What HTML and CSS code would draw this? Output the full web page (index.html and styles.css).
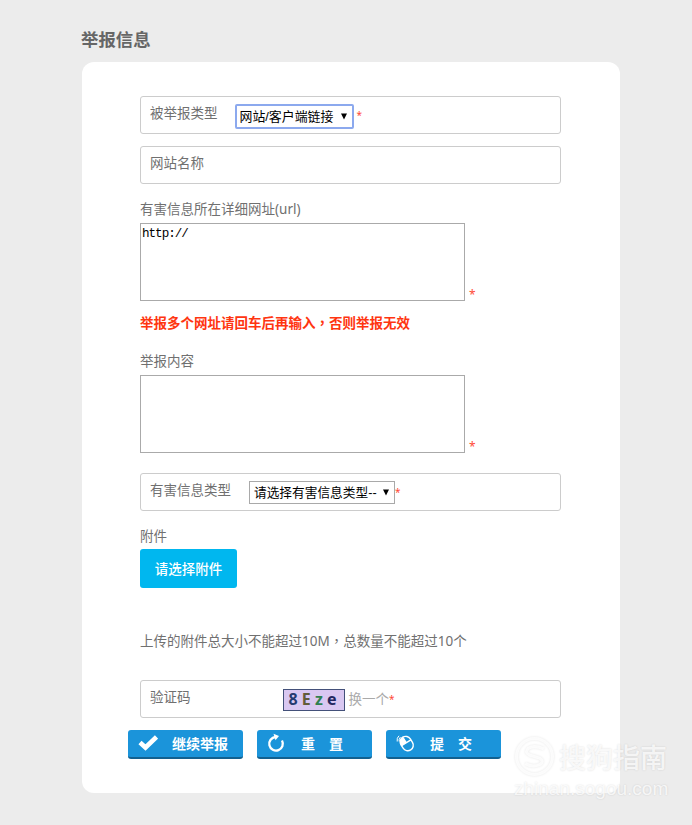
FILE: index.html
```
<!DOCTYPE html>
<html lang="zh-CN">
<head>
  <meta charset="UTF-8" />
  <title>举报信息</title>
  <link rel="stylesheet" href="styles.css">
</head>
<body>
  <h1>举报信息</h1>
  <form class="card">
    <div class="row">
      <label class="name" for="target">被举报类型</label>
      <div class="select active">
        <select id="target"><option>网站/客户端链接</option></select>
        <svg class="arrow" viewBox="0 0 6 7"><path d="M0 0.5h6L3 6.5z"/></svg>
      </div>
      <span class="star">*</span>
    </div>
    <div class="row">
      <label class="name">网站名称</label>
    </div>

    <label class="title" for="url">有害信息所在详细网址(url)</label>
    <div class="area">
      <textarea id="url">http://</textarea>
      <span class="star">*</span>
    </div>
    <p class="warn">举报多个网址请回车后再输入<span lang="zh-TW" class="comma">，</span>否则举报无效</p>

    <label class="title" for="content">举报内容</label>
    <div class="area">
      <textarea id="content"></textarea>
      <span class="star">*</span>
    </div>

    <div class="row kind">
      <label class="name" for="kind">有害信息类型</label>
      <div class="select">
        <select id="kind"><option>请选择有害信息类型--</option></select>
        <svg class="arrow" viewBox="0 0 6 7"><path d="M0 0.5h6L3 6.5z"/></svg>
      </div>
      <span class="star">*</span>
    </div>

    <div class="title">附件</div>
    <button type="button" class="upload">请选择附件</button>
    <p class="limit">上传的附件总大小不能超过10M<span lang="zh-TW" class="comma">，</span>总数量不能超过10个</p>

    <div class="row code">
      <label class="name">验证码</label>
      <div class="captcha"><span class="c1">8</span><span class="c2">E</span><span class="c3">z</span><span class="c4">e</span></div>
      <a class="change">换一个</a>
      <span class="star">*</span>
    </div>

    <div class="buttons">
      <button type="button">
        <svg class="icon" viewBox="0 0 20 20"><path d="M2 9.5l5.5 5L18.5 4" fill="none" stroke="#fff" stroke-width="4.6"/></svg>
        <span>继续举报</span>
      </button>
      <button type="button">
        <svg class="icon" viewBox="0 0 20 20"><path d="M8.5 4A6.8 6.8 0 1 0 15 7.5" fill="none" stroke="#fff" stroke-width="2.3"/><path d="M6.5 0.8l5.500 2.200-3.500 4.300z" fill="#fff"/></svg>
        <span>重<i></i>置</span>
      </button>
      <button type="button">
        <svg class="icon" viewBox="0 0 20 20">
          <g transform="rotate(-32 11 11)" fill="none" stroke="#fff" stroke-width="1.4">
            <rect x="5.5" y="3" width="11" height="15" rx="5.5"/>
            <path d="M5.5 9.5h11M11 3.5v6"/>
            <path d="M6 9V7.5Q6.8 4 10.5 3.5V9z" fill="#fff"/>
          </g>
          <path d="M1.2 8.5Q.5 5 3 2.8M3.2 8.5Q2.6 6 4.4 4.2" fill="none" stroke="#fff" stroke-width="1"/>
        </svg>
        <span>提<i></i>交</span>
      </button>
    </div>
  </form>

  <div class="watermark">
    <div class="brand">
      <svg viewBox="0 0 40 40">
        <circle cx="20" cy="20" r="17.5"/>
        <path d="M29 12.5Q20 8.5 14 12Q10 16 15 18.5L25 21.5Q30 25 25 28Q18 31 11 27"/>
      </svg>
      <span>搜狗指南</span>
    </div>
    <div class="site">zhinan.sogou.com</div>
  </div>
</body>
</html>
```
FILE: styles.css
```
* { box-sizing: border-box; }
body {
  position: relative;
  margin: 0;
  height: 825px;
  padding: 26px 72px 0 82px;
  overflow: hidden;
  background: #ececec;
  color: #707070;
  font-family: "Noto Sans", "Noto Sans CJK SC", sans-serif;
  font-size: 13.5px;
}
h1 {
  margin: 0 0 10px -1px;
  font-size: 17.4px;
  line-height: 26px;
  color: #666;
}
p { margin: 0; }
.card {
  height: 731px;
  padding: 34px 59px 0 58px;
  border-radius: 12px;
  background: #fff;
}
.row {
  display: flex;
  height: 38px;
  margin-bottom: 12px;
  padding-left: 9px;
  border: 1px solid #ccc;
  border-radius: 3px;
}
.name { line-height: 32px; }
.select {
  display: flex;
  align-items: center;
  width: 146px;
  height: 23px;
  margin: 7px 0 0 18px;
  padding: 0 5px 0 4px;
  border: 1px solid #a9a9a9;
}
.select select {
  flex: 1;
  min-width: 0;
  padding: 0;
  border: 0;
  outline: 0;
  appearance: none;
  background: none;
  color: #000;
  font: 12.7px "Liberation Sans", "Noto Sans CJK SC", sans-serif;
}
.select.active {
  width: 119px;
  height: 25px;
  margin: 7px 0 0 17px;
  padding: 0 5px 0 3px;
  border: 2px solid #8ca9ee;
  border-radius: 2px;
}
.active select { font-size: 12.9px; }
.arrow { width: 6px; height: 7px; }
.star { color: #ff4a36; font-size: 10px; }
.row .star { line-height: 36px; }
.active + .star { margin-left: 3px; }
.title {
  display: block;
  line-height: 20px;
}
.row + .title { margin-top: 15px; }
.area { display: flex; align-items: flex-end; }
.area .star { margin-left: 4px; line-height: 13px; font-size: 12px; }
textarea {
  display: block;
  width: 325px;
  height: 78px;
  margin-top: 4px;
  padding: 2px 1px;
  border: 1px solid #aaa;
  resize: none;
  color: #000;
  font: 12.6px/17px "Liberation Mono", monospace;
  letter-spacing: -1px;
}
.warn {
  margin: 12px 0 18px;
  line-height: 20px;
  color: #ff3510;
  font-weight: bold;
}
.comma { font-family: "Noto Sans CJK TC", sans-serif; line-height: 1; }
.row.kind { margin: 20px 0 0; }
.upload {
  display: block;
  width: 97px;
  height: 39px;
  margin-top: 3px;
  padding: 0 0 2px;
  border: 0;
  border-radius: 3px;
  background: #00b7ef;
  color: #fff;
  font: 500 13.5px "Noto Sans CJK SC", sans-serif;
}
.limit {
  margin: 43px 0 29px;
  line-height: 20px;
}
.captcha {
  display: flex;
  justify-content: space-between;
  width: 62px;
  height: 22px;
  margin: 8px 4px 0 92px;
  padding: 0 7px 0 5px;
  border: 1px solid #435079;
  background: #d9c7f1;
  font: bold 16px/19px "Noto Sans", sans-serif;
}
.c1 { color: #253b70; }
.c2 { color: #625c39; }
.c3 { color: #308050; }
.c4 { color: #22265f; }
.change { line-height: 37px; color: #aaa; }
.buttons {
  display: flex;
  gap: 14px;
  margin-left: -12px;
}
.buttons button {
  display: flex;
  align-items: center;
  width: 115px;
  height: 29px;
  padding: 0 0 1px 10px;
  border: 0;
  border-bottom: 2px solid #12608f;
  border-radius: 3px;
  background: #1b94da;
  color: #fff;
  font: bold 14px "Noto Sans CJK SC", sans-serif;
}
.buttons .icon {
  width: 20px;
  height: 20px;
  margin-right: 14px;
}
.buttons i {
  display: inline-block;
  width: 14px;
}
.watermark {
  position: absolute;
  left: 514px;
  top: 735px;
  width: 160px;
  color: rgba(255, 255, 255, 0.8);
  text-shadow: 0 0 2px rgba(0, 0, 0, 0.14);
}
.brand {
  display: flex;
  align-items: center;
  height: 42px;
  gap: 4px;
  font-size: 27px;
  font-weight: 500;
}
.brand svg {
  width: 41px;
  height: 41px;
  fill: none;
  stroke: rgba(255, 255, 255, 0.8);
  stroke-width: 3;
  filter: drop-shadow(0 0 1px rgba(0, 0, 0, 0.12));
}
.site {
  font: 19px/24px "Liberation Sans", sans-serif;
}
```
